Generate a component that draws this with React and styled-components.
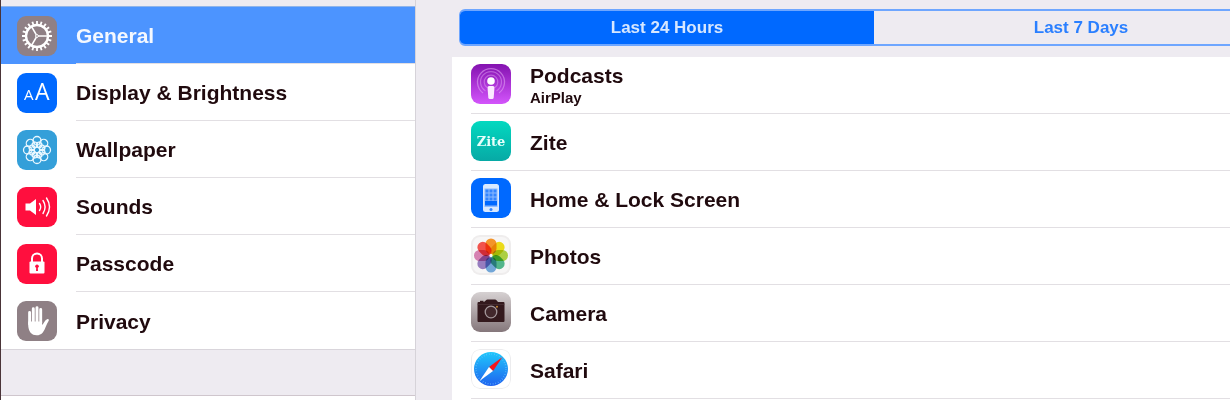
import React, { useState } from "react";
import styled, { createGlobalStyle } from "styled-components";

const GlobalStyle = createGlobalStyle`
  * {
    box-sizing: border-box;
  }

  body {
    margin: 0;
    overflow: hidden;
    background: #eeebf1;
    color: #200a0e;
    font-family: "Liberation Sans", Arial, sans-serif;
  }
`;

const Page = styled.div`
  display: flex;
  min-height: 100vh;
`;

const Sidebar = styled.nav`
  flex: none;
  width: 416px;
  display: flex;
  flex-direction: column;
  padding-top: 6px;
  border-left: 1px solid #4a3438;
  border-right: 1px solid #d6d3d9;
`;

const Group = styled.ul`
  list-style: none;
  margin: 0;
  padding: 0;
  background: #fff;
  border-top: 1px solid #8fb4ea;
  border-bottom: 1px solid #d9d5db;
`;

const NextGroup = styled.div`
  flex: 1;
  margin-top: 45px;
  background: #fff;
  border-top: 1px solid #cfc6cd;
`;

const Item = styled.li`
  display: flex;
`;

const ItemLink = styled.a`
  flex: 1;
  display: flex;
  align-items: center;
  gap: 19px;
  height: 57px;
  padding-left: 16px;
  text-decoration: none;
  color: ${({ $active }) => ($active ? "#f4f8ff" : "inherit")};
  background: ${({ $active }) => ($active ? "#4c94ff" : "transparent")};
`;

const ItemText = styled.span`
  flex: 1;
  display: flex;
  align-items: center;
  height: 57px;
  padding-top: 2px;
  font-size: 21px;
  font-weight: 700;
  border-bottom: 1px solid #e2dfe3;

  ${Item}:last-child & {
    border-bottom: 0;
  }
`;

const Main = styled.main`
  flex: 1;
  min-width: 0;
  display: flex;
  flex-direction: column;
  padding: 9px 0 0 36px;
`;

const Segments = styled.div`
  display: flex;
  min-width: 830px;
  height: 37px;
  margin: 0 7px 11px;
  border: 1px solid #6ea6ff;
  border-width: 2px 1px;
  border-radius: 6px;
  overflow: hidden;
`;

const Segment = styled.button`
  flex: 1;
  border: 0;
  padding: 0;
  font-family: inherit;
  font-size: 17px;
  font-weight: 700;
  cursor: pointer;
  color: ${({ $active }) => ($active ? "#d6e7ff" : "#2a7fff")};
  background: ${({ $active }) => ($active ? "#0069ff" : "transparent")};
`;

const AppList = styled.ul`
  flex: 1;
  list-style: none;
  margin: 0;
  padding: 0 0 0 19px;
  background: #fff;
`;

const AppRow = styled.li`
  display: flex;
  align-items: center;
  gap: 19px;
  height: 57px;
  padding-bottom: 2px;
  border-bottom: 1px solid #e2dfe3;
`;

const AppText = styled.div`
  display: flex;
  flex-direction: column;
  padding-top: 4px;
`;

const AppName = styled.span`
  font-size: 21px;
  line-height: 24px;
  font-weight: 700;
`;

const AppDetail = styled.span`
  font-size: 15px;
  line-height: 20px;
  font-weight: 700;
`;

const Tile = styled.svg`
  flex: none;
  display: block;
  width: 40px;
  height: 40px;
  border-radius: 9px;
  background: ${({ $fill }) => $fill};
`;

const ZiteMark = styled.text`
  font-family: "DejaVu Serif", serif;
  font-size: 13px;
  font-weight: 700;
  fill: #e6fffb;
`;

const LetterMark = styled.text`
  font-family: "Open Sans", sans-serif;
  font-size: ${({ $large }) => ($large ? "23px" : "15px")};
  fill: #fff;
`;

const turns = (n) => Array.from({ length: n }, (_, i) => (i * 360) / n);

const GearIcon = () => (
  <Tile viewBox="0 0 40 40" $fill="#8f8085">
    <g stroke="#fff" fill="none">
      <circle cx="20" cy="20" r="11" strokeWidth="2.4" />
      {turns(20).map((a) => (
        <path key={a} d="M20 8.5V5" strokeWidth="1.8" transform={`rotate(${a} 20 20)`} />
      ))}
      {[90, 210, 330].map((a) => (
        <path key={a} d="M20 19V9.5" strokeWidth="1.6" transform={`rotate(${a} 20 20)`} />
      ))}
      <circle cx="20" cy="20" r="1.4" strokeWidth="1" fill="#8f8085" />
    </g>
  </Tile>
);

const DisplayIcon = () => (
  <Tile viewBox="0 0 40 40" $fill="#0069ff">
    <LetterMark x="7" y="27">A</LetterMark>
    <LetterMark x="18" y="27" $large>A</LetterMark>
  </Tile>
);

const WallpaperIcon = () => (
  <Tile viewBox="0 0 40 40" $fill="#349fd9">
    <g stroke="#e9f7ff" strokeWidth="1.3" fill="none">
      <circle cx="20" cy="20" r="2.8" />
      {turns(8).map((a) => (
        <circle key={a} cx="20" cy="10.5" r="4" transform={`rotate(${a} 20 20)`} />
      ))}
      {turns(8).map((a) => (
        <circle key={a} cx="20" cy="14.5" r="2.7" transform={`rotate(${a + 22.5} 20 20)`} />
      ))}
    </g>
  </Tile>
);

const SoundsIcon = () => (
  <Tile viewBox="0 0 40 40" $fill="#ff0f3e">
    <path d="M8.5 16.5h4.500l6-4.500v16l-6-4.500h-4.500z" fill="#fff" />
    <g stroke="#fff" fill="none" strokeLinecap="round" strokeWidth="1.4">
      <path d="M22.5 16.5q2.4 3.5 0 7" />
      <path d="M26 13.5q4.200 6.500 0 13" />
      <path d="M29.5 11q6 9 0 18" />
    </g>
  </Tile>
);

const LockIcon = () => (
  <Tile viewBox="0 0 40 40" $fill="#ff0f3e">
    <path d="M15 19v-4.500a5 5 0 0 1 10 0v4.500" fill="none" stroke="#fff" strokeWidth="2" />
    <rect x="12.5" y="17.5" width="15" height="12" rx="1" fill="#fff" />
    <circle cx="20" cy="22.3" r="1.8" fill="#ff0f3e" />
    <path d="M19.3 22.5h1.400l.3 4.500h-2z" fill="#ff0f3e" />
  </Tile>
);

const HandIcon = () => (
  <Tile viewBox="0 0 40 40" $fill="#8f8085">
    <g stroke="#fff" strokeWidth="2.9" strokeLinecap="round">
      <path d="M12.600 11.500V23M16.300 7.800V22M20 6.600V22M23.700 8.500V22" />
    </g>
    <path
      d="M11.200 20.500h13.900v3.600c1.500-1.500 2.700-5 5-5.900 1.400-.4 2.200.5 1.600 1.500-2.300 3.300-3.300 8.300-5.900 11.700-2.700 3.700-9.400 3.700-12.200.3-1.600-2-2.400-5-2.400-7.700z"
      fill="#fff"
    />
  </Tile>
);

const PodcastsIcon = () => (
  <Tile viewBox="0 0 40 40" $fill="linear-gradient(#8412b0, #d355fb)">
    <g fill="none" stroke="#dfa0f2">
      <path d="M14.500 27a10.500 10.500 0 1 1 11 0" strokeWidth="1.2" opacity=".5" />
      <path d="M12 29a13.500 13.500 0 1 1 16 0" strokeWidth="1.3" opacity=".6" />
      <path d="M16 23.500a6.800 6.800 0 1 1 8 0" strokeWidth="1.2" opacity=".5" />
    </g>
    <circle cx="20" cy="17" r="3.8" fill="#fff" />
    <path d="M16.500 23.500q0-1.500 1.500-1.500h4q1.500 0 1.500 1.500l-.8 10q-.2 1.500-1.400 1.500h-2.600q-1.200 0-1.400-1.500z" fill="#fbe9ff" />
  </Tile>
);

const ZiteIcon = () => (
  <Tile viewBox="0 0 40 40" $fill="linear-gradient(#03d9c0, #07a9a5)">
    <ZiteMark x="20" y="25" textAnchor="middle">
      Zite
    </ZiteMark>
  </Tile>
);

const HomeIcon = () => (
  <Tile viewBox="0 0 40 40" $fill="#0069ff">
    <rect x="12" y="6" width="16" height="28" rx="2.5" fill="#d9e9ff" />
    <rect x="13.5" y="10.5" width="13" height="18.5" fill="#8cbaff" />
    <g fill="#3385ff">
      {[11.5, 15.5, 19.5].map((y) =>
        [14.5, 18.5, 22.5].map((x) => (
          <rect key={`${x}-${y}`} x={x} y={y} width="3" height="3" />
        ))
      )}
      <rect x="14" y="23" width="12" height="4.5" fill="#0069ff" />
      <circle cx="20" cy="31.5" r="1.5" />
    </g>
  </Tile>
);

const petals = [
  "#fb9a2b",
  "#f3e21a",
  "#b2d743",
  "#55bd90",
  "#76acdf",
  "#9c82c6",
  "#dd86b8",
  "#f9564f",
];

const Petal = styled.rect`
  mix-blend-mode: multiply;
`;

const PhotosIcon = () => (
  <Tile viewBox="0 0 40 40" $fill="#efeded">
    <rect x="2" y="2" width="36" height="36" rx="7" fill="#f7f6f6" />
    {petals.map((color, i) => (
      <Petal
        key={color}
        x="14.5"
        y="3.5"
        width="11"
        height="15.5"
        rx="5.5"
        fill={color}
        transform={`rotate(${i * 45} 20 20.5)`}
      />
    ))}
  </Tile>
);

const CameraIcon = () => (
  <Tile viewBox="0 0 40 40" $fill="linear-gradient(#d6d1d2, #85777b)">
    <path
      d="M7.500 10h5.500l2-1.700q.5-.8 1.500-.8h7.500q1 0 1.500.8l1.500 1.700h5.500q1 0 1 1v18q0 1-1 1h-25q-1 0-1-1v-18q0-1 1-1z"
      fill="#33191d"
    />
    <rect x="9" y="8.8" width="3.5" height="2" fill="#33191d" />
    <circle cx="20" cy="20" r="5.8" fill="#42282c" stroke="#a3979a" strokeWidth="1.3" />
    <circle cx="26" cy="14.8" r="1" fill="#c68b35" />
    <path d="M6.500 12.500h27" stroke="#594044" strokeWidth=".5" />
  </Tile>
);

const SafariIcon = () => (
  <Tile viewBox="0 0 40 40" $fill="#fff">
    <defs>
      <linearGradient id="safari" x1="0" y1="0" x2="0" y2="1">
        <stop offset="0" stopColor="#1fc8fb" />
        <stop offset="1" stopColor="#1f62ef" />
      </linearGradient>
    </defs>
    <rect x=".5" y=".5" width="39" height="39" rx="8.5" fill="none" stroke="#ececee" />
    <circle cx="20" cy="20" r="17" fill="url(#safari)" />
    <circle cx="20" cy="20" r="15" fill="none" stroke="#6cc2ff" strokeWidth="1.5" strokeDasharray=".6 2.02" />
    <path d="M31.500 8L18 18l4 4z" fill="#f5141d" />
    <path d="M8.500 32L18 18l4 4z" fill="#fff" />
  </Tile>
);

const settings = [
  { name: "General", Icon: GearIcon },
  { name: "Display & Brightness", Icon: DisplayIcon },
  { name: "Wallpaper", Icon: WallpaperIcon },
  { name: "Sounds", Icon: SoundsIcon },
  { name: "Passcode", Icon: LockIcon },
  { name: "Privacy", Icon: HandIcon },
];

const apps = [
  { name: "Podcasts", detail: "AirPlay", Icon: PodcastsIcon },
  { name: "Zite", Icon: ZiteIcon },
  { name: "Home & Lock Screen", Icon: HomeIcon },
  { name: "Photos", Icon: PhotosIcon },
  { name: "Camera", Icon: CameraIcon },
  { name: "Safari", Icon: SafariIcon },
];

const periods = ["Last 24 Hours", "Last 7 Days"];

export default function App() {
  const [section, setSection] = useState("General");
  const [period, setPeriod] = useState(periods[0]);

  return (
    <Page>
      <GlobalStyle />
      <Sidebar>
        <Group>
          {settings.map(({ name, Icon }) => (
            <Item key={name}>
              <ItemLink href="#" $active={name === section} onClick={() => setSection(name)}>
                <Icon />
                <ItemText>{name}</ItemText>
              </ItemLink>
            </Item>
          ))}
        </Group>
        <NextGroup />
      </Sidebar>
      <Main>
        <Segments>
          {periods.map((label) => (
            <Segment key={label} $active={label === period} onClick={() => setPeriod(label)}>
              {label}
            </Segment>
          ))}
        </Segments>
        <AppList>
          {apps.map(({ name, detail, Icon }) => (
            <AppRow key={name}>
              <Icon />
              <AppText>
                <AppName>{name}</AppName>
                {detail && <AppDetail>{detail}</AppDetail>}
              </AppText>
            </AppRow>
          ))}
        </AppList>
      </Main>
    </Page>
  );
}
